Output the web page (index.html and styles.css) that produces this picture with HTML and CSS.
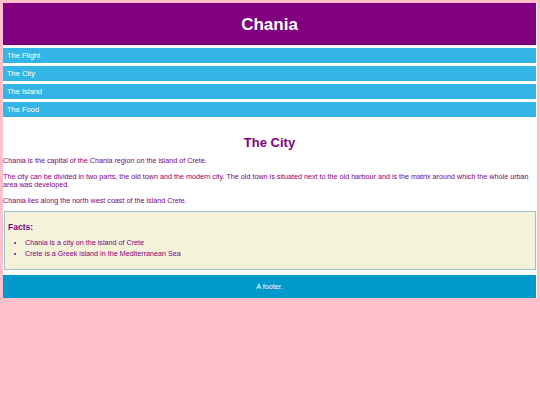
FILE: index.html
```html
<!DOCTYPE html>
<html>
<head>
<meta charset="utf-8">
<title>Chania</title>
<link rel="stylesheet" href="styles.css">
</head>
<body>
<div class="page">
  <header class="header"><h1 class="title">Chania</h1></header>
  <nav class="menu">
    <div class="menu-item">The Flight</div>
    <div class="menu-item">The City</div>
    <div class="menu-item">The Island</div>
    <div class="menu-item">The Food</div>
  </nav>
  <main class="main">
    <h2 class="heading">The City</h2>
    <p class="text">Chania is the capital of the Chania region on the island of Crete.</p>
    <p class="text">The city can be divided in two parts, the old town and the modern city. The old town is situated next to the old harbour and is the matrix around which the whole urban area was developed.</p>
    <p class="text">Chania lies along the north west coast of the island Crete.</p>
  </main>
  <aside class="facts">
    <h3 class="facts-title">Facts:</h3>
    <ul class="facts-list">
      <li>Chania is a city on the island of Crete</li>
      <li>Crete is a Greek island in the Mediterranean Sea</li>
    </ul>
  </aside>
  <footer class="footer">A footer.</footer>
</div>
</body>
</html>
```
FILE: styles.css
```css
html, body {
  margin: 0;
  padding: 0;
}
body {
  background: #ffc0cb;
  font-family: "Liberation Sans", Arial, sans-serif;
}
.page {
  margin: 3px 3px 0 3px;
  padding-right: 1px;
  background: #ffffff;
  display: flex;
  flex-direction: column;
}
.header {
  background: #800080;
  height: 42px;
  display: flex;
  align-items: center;
  justify-content: center;
}
.title {
  margin: 2px 0 0 0;
  color: #ffffff;
  font-size: 17px;
  font-weight: bold;
  line-height: 20px;
}
.menu {
  display: flex;
  flex-direction: column;
  gap: 3px;
  margin-top: 3px;
}
.menu-item {
  background: #33b5e5;
  color: #ffffff;
  height: 15px;
  line-height: 16px;
  font-size: 7.5px;
  padding-left: 4px;
}
.main {
  color: #800080;
}
.heading {
  margin: 18px 0 6px 0;
  text-align: center;
  font-size: 13px;
  line-height: 16px;
  font-weight: bold;
}
.text {
  margin: 0 0 8px 0;
  font-size: 7.2px;
  line-height: 8px;
}
.text:last-child {
  margin-bottom: 6px;
}
.facts {
  background: #f4f3da;
  border: 1px solid #99c2cc;
  color: #800080;
  padding: 10px 4px 10px 3px;
  margin-left: 1px;
}
.facts-title {
  margin: 0;
  font-size: 8.5px;
  line-height: 10px;
  font-weight: bold;
}
.facts-list {
  margin: 5px 0 0 0;
  padding-left: 17px;
  font-size: 7.2px;
  line-height: 11px;
}
.footer {
  margin-top: 5px;
  height: 23px;
  background: #0099cc;
  color: #ffffff;
  font-size: 7.2px;
  display: flex;
  align-items: center;
  justify-content: center;
}
```
